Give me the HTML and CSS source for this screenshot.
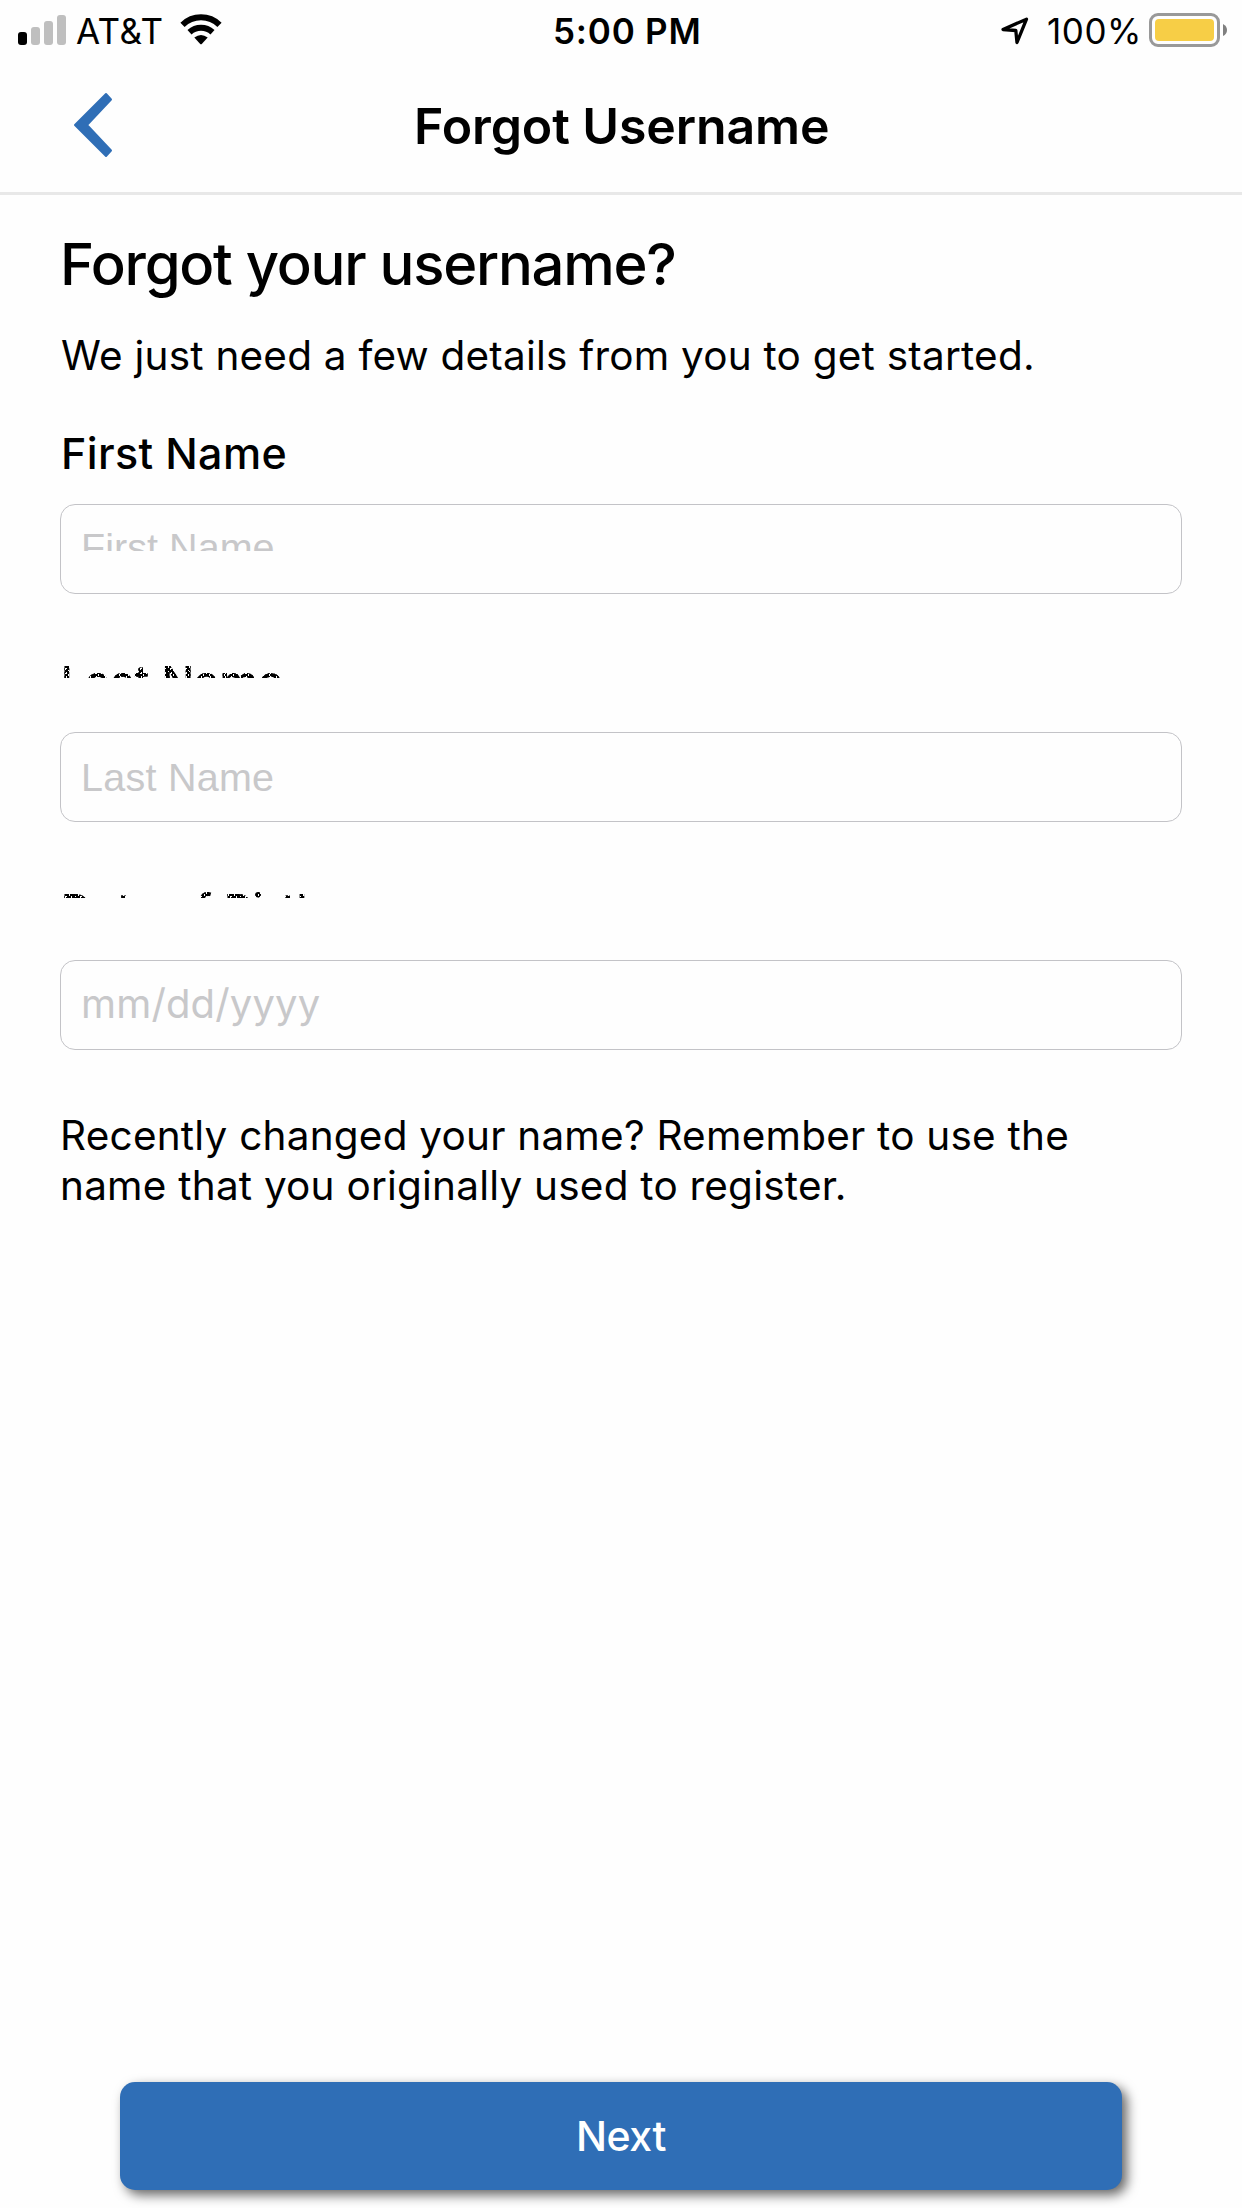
FILE: index.html
```html
<!DOCTYPE html>
<html lang="en">
<head>
<meta charset="utf-8">
<title>Forgot Username</title>
<link rel="stylesheet" href="styles.css">
</head>
<body>
<div class="screen">
  <div class="status">
    <div class="status-left">
      <svg class="signal" width="48" height="30" viewBox="0 0 48 30">
        <rect x="0" y="17" width="9" height="13" rx="3" fill="#000"/>
        <rect x="13" y="12" width="9" height="18" rx="3" fill="#bfbfbf"/>
        <rect x="26" y="6" width="9" height="24" rx="3" fill="#bfbfbf"/>
        <rect x="39" y="0" width="9" height="30" rx="3" fill="#bfbfbf"/>
      </svg>
      <span class="carrier">AT&amp;T</span>
      <svg class="wifi" width="42" height="31" viewBox="0 0 42 31">
        <path d="M2.500 10.800A26.500 26.500 0 0 1 39.500 10.800" fill="none" stroke="#000" stroke-width="6"/>
        <path d="M9.500 18.200A17 17 0 0 1 32.500 18.200" fill="none" stroke="#000" stroke-width="6"/>
        <path d="M14.300 23.500Q21 18.300 27.700 23.500L22 29.700Q21 30.700 20 29.700Z"/>
      </svg>
    </div>
    <div class="clock">5:00 PM</div>
    <div class="status-right">
      <svg class="location" width="28" height="28" viewBox="0 0 28 28">
        <path d="M2 12.500L25.500 2.200L16 25.500L14.800 13.500Z" fill="none" stroke="#000" stroke-width="3.300" stroke-linejoin="round"/>
      </svg>
      <span class="percent">100%</span>
      <svg class="battery" width="78" height="34" viewBox="0 0 78 34">
        <rect x="1.500" y="1.500" width="68" height="31" rx="7.500" fill="none" stroke="#999" stroke-width="3"/>
        <rect x="6" y="6" width="59" height="22" rx="4" fill="#f7ce46"/>
        <path d="M74 11Q78 13 78 17T74 23Z" fill="#808080"/>
      </svg>
    </div>
  </div>
  <header class="nav">
    <svg class="back" width="40" height="68" viewBox="0 0 40 68">
      <path d="M2 34L33 3L38 8.500L14 34L38 59.500L33 65Z" fill="#2f6eb6" stroke="#2f6eb6" stroke-width="2" stroke-linejoin="round"/>
    </svg>
    <h1>Forgot Username</h1>
  </header>
  <main class="content">
    <h2>Forgot your username?</h2>
    <p class="intro">We just need a few details from you to get started.</p>
    <div class="group">
      <div class="label">First Name</div>
      <div class="field"><span class="hint hint-cut">First Name</span></div>
    </div>
    <div class="group">
      <div class="label label-last">Last Name</div>
      <div class="field"><span class="hint">Last Name</span></div>
    </div>
    <div class="group">
      <div class="label label-date">Date of Birth</div>
      <div class="field"><span class="hint hint-date">mm/dd/yyyy</span></div>
    </div>
    <p class="note">Recently changed your name? Remember to use the<br>name that you originally used to register.</p>
  </main>
  <footer class="actions">
    <button class="next" type="button">Next</button>
  </footer>
</div>
</body>
</html>
```
FILE: styles.css
```css
* { box-sizing: border-box; }
body { margin: 0; background: #fefefe; color: #000; font-family: Inter, "Liberation Sans", sans-serif; }
h1, h2, p { margin: 0; }
svg { display: block; flex: none; }
.screen { width: 1242px; height: 2208px; display: flex; flex-direction: column; overflow: hidden; }

.status { height: 62px; padding: 0 15px 0 18px; display: flex; justify-content: space-between; align-items: flex-start; font-size: 35px; line-height: 62px; white-space: nowrap; }
.status-left, .status-right { display: flex; align-items: flex-start; }
.status-left { width: 535px; }
.status-right { width: 500px; justify-content: flex-end; }
.signal { margin-top: 15px; }
.carrier { width: 104px; margin-left: 10px; letter-spacing: .45px; }
.wifi { margin-top: 14px; }
.clock { flex: 1; font-weight: 600; letter-spacing: .79px; }
.location { margin: 17px 18px 0 0; }
.percent { width: 102px; letter-spacing: .53px; }
.battery { margin-top: 13px; }

.nav { height: 133px; display: grid; grid-template-columns: 414px 1fr 412px; align-items: start; border-bottom: 3px solid #e8e8e8; }
.back { margin: 29px 0 0 73px; }
.nav h1 { font-size: 50px; line-height: 70px; margin-top: 29px; font-weight: 600; letter-spacing: -.1px; white-space: nowrap; }

.content { flex: 1; padding: 34px 60px 0; }
h2 { font-size: 58px; line-height: 70px; font-weight: 500; letter-spacing: -1.26px; }
.intro { padding-left: 1px; font-size: 40.5px; line-height: 50px; letter-spacing: .22px; margin: 32px 0 47px; white-space: nowrap; }
.group { height: 166px; margin-bottom: 62px; }
.label { height: 50px; margin-bottom: 26px; padding-left: 1px; font-size: 43px; line-height: 50px; font-weight: 500; letter-spacing: .36px; }

.label-last, .label-date {
  color: transparent;
  background:
    repeating-conic-gradient(#000 0 25%, transparent 0 50%) 0 0 / 5px 4px,
    repeating-conic-gradient(#000 0 25%, #fff 0 50%) 0 0 / 3px 5px;
  -webkit-background-clip: text;
  background-clip: text;
}
.label-last { letter-spacing: .5px; clip-path: inset(0 0 28px 0); }
.label-date { letter-spacing: .36px; clip-path: inset(0 0 36px 0); }

.field { height: 90px; padding-left: 20px; border: 1px solid #c3c3c7; border-radius: 15px; }
.hint { display: block; color: #c8c8ca; font-family: "Liberation Sans", Arial, sans-serif; font-size: 39.5px; line-height: 88px; letter-spacing: .25px; }
.hint-cut { line-height: 84px; letter-spacing: .05px; clip-path: inset(0 0 38px 0); }
.hint-date { font-family: Inter, sans-serif; font-size: 40px; line-height: 85px; letter-spacing: .15px; }
.note { margin-top: -1px; font-size: 40.5px; line-height: 50px; letter-spacing: .22px; white-space: nowrap; }

.actions { height: 126px; padding: 0 120px; }
.next { display: block; width: 1002px; height: 108px; padding: 0; border: 0; border-radius: 15px; background: #2f6eb6; color: #fff; font: 500 41px/108px Inter, sans-serif; letter-spacing: -.4px; box-shadow: 5px 5px 12px rgba(0, 0, 0, .6); }
```
